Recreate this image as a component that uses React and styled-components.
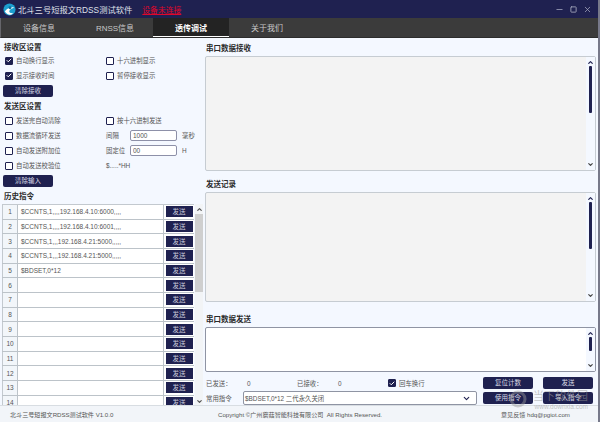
import React from 'react'
import styled, { createGlobalStyle } from 'styled-components'
import { Check, ChevronUp, ChevronDown, Minus, Square, X } from 'lucide-react'

const FONT = '"Liberation Sans", "Noto Sans CJK SC", sans-serif'
const NAVY = '#1f2150'

const GlobalStyle = createGlobalStyle`
    html, body { margin: 0; padding: 0; background: #f4f8ff; }
    body { font-family: ${FONT}; width: 600px; height: 422px; overflow: hidden; }
    * { box-sizing: border-box; }
`

const history = [
    '$CCNTS,1,,,,192.168.4.10:6000,,,,',
    '$CCNTS,1,,,,192.168.4.10:6001,,,,',
    '$CCNTS,1,,,192.168.4.21:5000,,,,,',
    '$CCNTS,1,,,192.168.4.21:5000,,,,,',
    '$BDSET,0*12',
    '', '', '', '', '', '', '', '', '',
]

function Box({ on, label }) {
    return (
        <CheckRow>
            <CheckMark $on={on}>{on && <Check size={7} color="#fff" strokeWidth={4} />}</CheckMark>
            {label}
        </CheckRow>
    )
}

function Scroll({ thumb }) {
    return (
        <ScrollCol>
            <ChevronUp size={7} color={NAVY} strokeWidth={4} />
            <Thumb style={{ height: thumb }} />
            <ChevronDown size={7} color="#444" strokeWidth={4} />
        </ScrollCol>
    )
}

export default function App() {
    return (
        <Window>
            <GlobalStyle />
            <TitleBar>
                <svg width="13" height="13" viewBox="0 0 14 14">
                    <circle cx="7" cy="7" r="6.5" fill="#1c9fd0" />
                    <path d="M2 9c3-4 7-5 10-4-2 1-4 1-5 3s1 3 4 3c-3 3-7 2-9-2z" fill="#fff" />
                    <circle cx="7.5" cy="5" r="1.6" fill="#0b6f9f" />
                </svg>
                <AppName>北斗三号短报文RDSS测试软件</AppName>
                <Status>设备未连接</Status>
                <WinButtons>
                    <Minus size={9} color="#8d90ac" strokeWidth={2.5} />
                    <Square size={7} color="#a5a7bd" strokeWidth={3} />
                    <X size={9} color="#a5a7bd" strokeWidth={2} />
                </WinButtons>
            </TitleBar>

            <Tabs>
                <Tab>设备信息</Tab>
                <Tab>RNSS信息</Tab>
                <Tab $active>透传调试</Tab>
                <Tab>关于我们</Tab>
            </Tabs>

            <Main>
                <LeftPanel>
                    <Heading>接收区设置</Heading>
                    <OptionGrid>
                        <Box on label="自动换行显示" />
                        <Box label="十六进制显示" />
                        <Box on label="显示接收时间" />
                        <Box label="暂停接收显示" />
                    </OptionGrid>
                    <ClearButton>清除接收</ClearButton>

                    <Heading $top={4}>发送区设置</Heading>
                    <OptionGrid $top={1}>
                        <Box label="发送完自动清除" />
                        <Box label="按十六进制发送" />
                        <Box label="数据流循环发送" />
                        <FieldRow>
                            <FieldLabel>间隔</FieldLabel>
                            <Field defaultValue="1000" />
                            <span>毫秒</span>
                        </FieldRow>
                        <Box label="自动发送附加位" />
                        <FieldRow>
                            <FieldLabel>固定位</FieldLabel>
                            <Field defaultValue="00" />
                            <span>H</span>
                        </FieldRow>
                        <Box label="自动发送校验位" />
                        <FieldRow>$.....*HH</FieldRow>
                    </OptionGrid>
                    <ClearButton>清除输入</ClearButton>

                    <Heading $top={4}>历史指令</Heading>
                    <HistoryWrap>
                        <HistoryTable>
                            {history.map((cmd, i) => (
                                <HistoryRow key={i}>
                                    <RowNum>{i + 1}</RowNum>
                                    <RowCmd>{cmd}</RowCmd>
                                    <RowAction><SendSmall>发送</SendSmall></RowAction>
                                </HistoryRow>
                            ))}
                        </HistoryTable>
                        <HistoryScroll>
                            <ChevronUp size={7} color="#555" strokeWidth={4} />
                            <HistoryThumb />
                            <ChevronDown size={7} color="#555" strokeWidth={4} />
                        </HistoryScroll>
                    </HistoryWrap>
                </LeftPanel>

                <RightPanel>
                    <RightHeading>串口数据接收</RightHeading>
                    <TextBox $h={115}><Scroll thumb={47} /></TextBox>
                    <RightHeading $top={8}>发送记录</RightHeading>
                    <TextBox $h={110}><Scroll thumb={47} /></TextBox>
                    <RightHeading $top={12}>串口数据发送</RightHeading>
                    <TextBox $h={45} $white><Scroll thumb={14} /></TextBox>

                    <BottomGrid>
                        <Stat>
                            <StatLabel>已发送：</StatLabel><StatValue>0</StatValue>
                            <StatLabel>已接收：</StatLabel><StatValue>0</StatValue>
                            <Box on label="回车换行" />
                        </Stat>
                        <ActionButton>复位计数</ActionButton>
                        <ActionButton>发送</ActionButton>
                        <CommandRow>
                            <CommandLabel>常用指令</CommandLabel>
                            <Combo>
                                $BDSET,0*12 二代永久关闭
                                <ChevronDown size={9} color={NAVY} strokeWidth={3} />
                            </Combo>
                        </CommandRow>
                        <ActionButton>使用指令</ActionButton>
                        <ActionButton>导入指令</ActionButton>
                    </BottomGrid>
                </RightPanel>
            </Main>

            <Footer>
                <span>北斗三号短报文RDSS测试软件 V1.0.0</span>
                <span>Copyright ©广州蘑菇智能科技有限公司&nbsp; All Rights Reserved.</span>
                <span>意见反馈 hdq@pgiot.com</span>
            </Footer>

            <Watermark>
                <svg width="18" height="18" viewBox="0 0 18 18">
                    <circle cx="9" cy="9" r="7" fill="none" stroke="#999" strokeWidth="3" opacity="0.45" />
                </svg>
                <WatermarkText>
                    <WatermarkBig>当下软件园</WatermarkBig>
                    <span>www.downxia.com</span>
                </WatermarkText>
            </Watermark>
        </Window>
    )
}

const Window = styled.div`
    position: relative;
    width: 600px;
    height: 422px;
    display: flex;
    flex-direction: column;
    background: #f4f8ff;
    overflow: hidden;
    border-right: 2px solid #77798a;
`

const TitleBar = styled.div`
    height: 18px;
    flex: none;
    display: flex;
    align-items: center;
    padding: 0 6px 0 3px;
    background: ${NAVY};
    color: #dfe0ea;
`

const AppName = styled.span`
    margin-left: 2px;
    font-size: 8.3px;
`

const Status = styled.span`
    margin-left: 10px;
    font-size: 7.8px;
    color: #e0062a;
    text-decoration: underline;
`

const WinButtons = styled.div`
    margin-left: auto;
    display: flex;
    align-items: center;
    gap: 6px;
`

const Tabs = styled.div`
    height: 20px;
    flex: none;
    display: flex;
    background: #3b3b3b;
    border-left: 1px solid #66666b;
    border-bottom: 1px solid #2c2c2c;
`

const Tab = styled.div`
    width: 76px;
    display: flex;
    align-items: center;
    justify-content: center;
    font-size: 8px;
    font-weight: ${p => (p.$active ? 700 : 400)};
    color: ${p => (p.$active ? '#fff' : '#c8c8c8')};
    background: ${p => (p.$active ? '#232323' : 'transparent')};
    box-shadow: ${p => (p.$active ? 'inset 0 -1px 0 #fff' : 'none')};
`

const Main = styled.div`
    flex: 1;
    min-height: 0;
    display: grid;
    grid-template-columns: 205px 391px;
`

const LeftPanel = styled.div`
    padding: 4px 0 0 2px;
    display: flex;
    flex-direction: column;
    min-height: 0;
`

const RightPanel = styled.div`
    padding-top: 5px;
    display: flex;
    flex-direction: column;
`

const Heading = styled.div`
    height: 11px;
    margin-top: ${p => p.$top || 0}px;
    line-height: 11px;
    font-size: 7.5px;
    font-weight: 700;
    color: #2b2b2b;
    padding-left: 2px;
`

const RightHeading = styled(Heading)`
    padding-left: 1px;
`

const OptionGrid = styled.div`
    display: grid;
    grid-template-columns: 101px 100px;
    grid-auto-rows: 15px;
    padding: ${p => p.$top || 0}px 0 0 3px;
`

const CheckRow = styled.label`
    display: flex;
    align-items: center;
    gap: 3px;
    font-size: 6.4px;
    color: #555;
`

const CheckMark = styled.span`
    width: 8px;
    height: 8px;
    flex: none;
    display: flex;
    align-items: center;
    justify-content: center;
    border: 1px solid ${NAVY};
    border-radius: 1px;
    background: ${p => (p.$on ? NAVY : '#fff')};
`

const DarkButton = styled.button`
    width: 50px;
    height: 12px;
    padding: 0;
    flex: none;
    border: none;
    border-radius: 2px;
    background: ${NAVY};
    color: #d9dae6;
    font-family: ${FONT};
    font-size: 6.5px;
    line-height: 12px;
`

const ClearButton = styled(DarkButton)`
    margin: 2px 0 0 1px;
`

const ActionButton = styled(DarkButton)`
    align-self: center;
`

const FieldRow = styled.div`
    display: flex;
    align-items: center;
    font-size: 6.4px;
    color: #555;
`

const FieldLabel = styled.span`
    width: 24px;
`

const Field = styled.input`
    width: 47px;
    height: 11px;
    margin-right: 5px;
    padding: 0 2px;
    border: 1px solid #8d90a8;
    border-radius: 2px;
    background: #fff;
    color: #555;
    font-family: ${FONT};
    font-size: 6.5px;
    outline: none;
`

const HistoryWrap = styled.div`
    flex: 1;
    min-height: 0;
    margin-top: 2px;
    display: flex;
    overflow: hidden;
`

const HistoryTable = styled.div`
    width: 192px;
    flex: none;
    border-top: 1px solid #c3c9cf;
`

const HistoryRow = styled.div`
    height: 14.67px;
    display: grid;
    grid-template-columns: 15px 146px 31px;
    border-bottom: 1px solid #bcc3c9;
    font-size: 6.5px;
    color: #555;
`

const RowNum = styled.div`
    display: flex;
    align-items: center;
    justify-content: center;
    background: #f2f6fa;
    border-left: 1px solid #c3c9cf;
`

const RowCmd = styled.div`
    display: flex;
    align-items: center;
    padding-left: 3px;
    background: #fff;
    border-left: 1px solid #bcc3c9;
    white-space: nowrap;
`

const RowAction = styled.div`
    display: flex;
    align-items: center;
    justify-content: center;
    background: #fff;
    border-left: 1px solid #bcc3c9;
`

const SendSmall = styled.button`
    width: 27px;
    height: 11px;
    padding: 0;
    border: none;
    background: ${NAVY};
    color: #c9cadb;
    font-family: ${FONT};
    font-size: 6.5px;
    line-height: 11px;
`

const HistoryScroll = styled.div`
    width: 8px;
    margin-left: 1px;
    padding-top: 2px;
    display: flex;
    flex-direction: column;
    align-items: center;
    background: #f2f4f6;
`

const HistoryThumb = styled.div`
    width: 8px;
    height: 78px;
    margin: 1px 0 auto;
    background: #cfcfcf;
`

const TextBox = styled.div`
    height: ${p => p.$h}px;
    flex: none;
    display: flex;
    justify-content: flex-end;
    margin-top: 2px;
    border: 1px solid ${p => (p.$white ? '#8f94a3' : '#c6ccd2')};
    border-radius: 2px;
    background: ${p => (p.$white ? '#fff' : '#f3f3f3')};
`

const ScrollCol = styled.div`
    width: 9px;
    padding: 2px 0;
    display: flex;
    flex-direction: column;
    align-items: center;
    background: #f4f8ff;
`

const Thumb = styled.div`
    width: 3px;
    margin-bottom: auto;
    border-radius: 1px;
    background: ${NAVY};
`

const BottomGrid = styled.div`
    margin-top: 5px;
    display: grid;
    grid-template-columns: 278px 60px 50px;
    grid-template-rows: 12px 14px;
    row-gap: 2px;
`

const Stat = styled.div`
    display: flex;
    align-items: center;
    font-size: 6.4px;
    color: #555;
    padding-left: 1px;
`

const StatLabel = styled.span`
    width: 41px;
`

const StatValue = styled.span`
    width: 50px;
`

const CommandRow = styled.div`
    display: flex;
    align-items: center;
    font-size: 6.4px;
    color: #555;
    padding-left: 1px;
`

const CommandLabel = styled.span`
    width: 37px;
    flex: none;
`

const Combo = styled.div`
    width: 234px;
    height: 14px;
    display: flex;
    align-items: center;
    justify-content: space-between;
    padding: 0 5px 0 1px;
    border: 1px solid #8f94a3;
    border-radius: 2px;
    background: #fff;
`

const Footer = styled.div`
    height: 17px;
    flex: none;
    display: grid;
    grid-template-columns: 208px 283px 1fr;
    align-items: center;
    padding-left: 10px;
    border-top: 1px solid #d8dde2;
    background: #f2f5f9;
    font-size: 6.1px;
    color: #555;
`

const Watermark = styled.div`
    position: absolute;
    right: 10px;
    bottom: 11px;
    display: flex;
    align-items: flex-start;
    gap: 6px;
    pointer-events: none;
`

const WatermarkText = styled.div`
    display: flex;
    flex-direction: column;
    align-items: flex-end;
    font-size: 6.5px;
    line-height: 8px;
    color: rgba(150, 150, 150, 0.55);
`

const WatermarkBig = styled.span`
    font-size: 11px;
    line-height: 13px;
`
